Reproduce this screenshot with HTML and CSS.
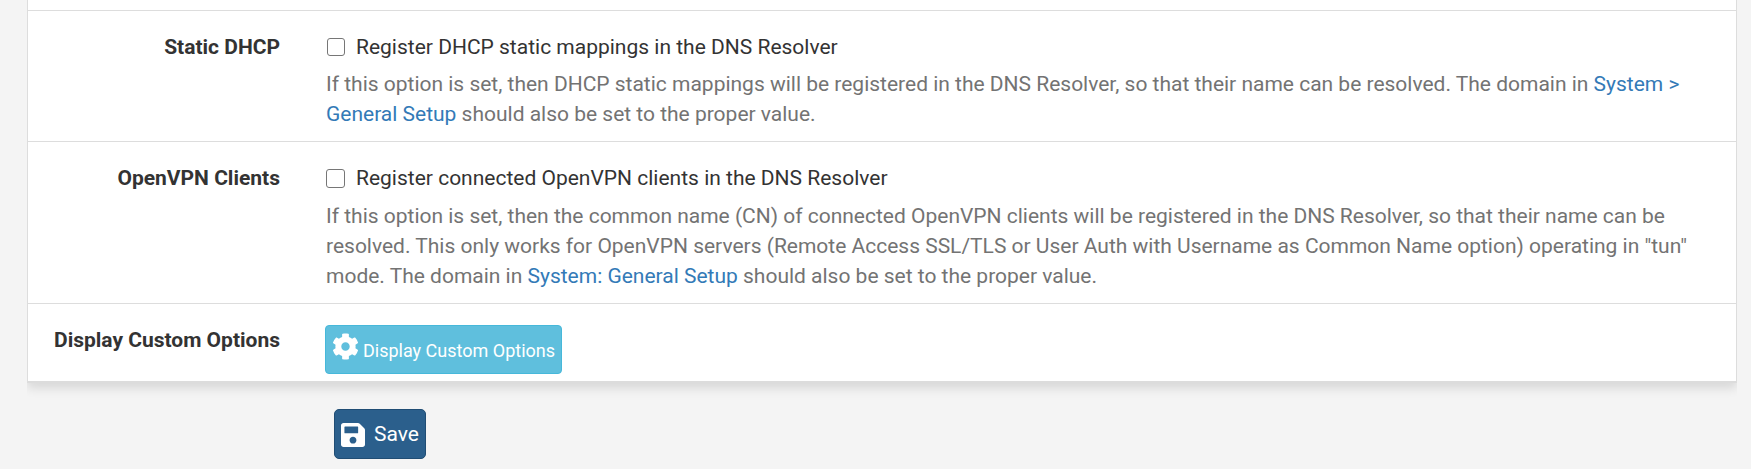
FILE: index.html
```
<!DOCTYPE html>
<html lang="en">
<head>
<meta charset="utf-8">
<title>DNS Resolver</title>
<link rel="stylesheet" href="styles.css">
</head>
<body>
<form class="page">
  <section class="panel">
    <div class="row row-static">
      <div class="label">Static DHCP</div>
      <div class="field">
        <label class="check"><input class="box" type="checkbox"><span class="check-text">Register DHCP static mappings in the DNS Resolver</span></label>
        <p class="help"><span class="line">If this option is set, then DHCP static mappings will be registered in the DNS Resolver, so that their name can be resolved. The domain in <a class="link">System &gt;</a></span> <span class="line"><a class="link">General Setup</a> should also be set to the proper value.</span></p>
      </div>
    </div>
    <div class="row row-vpn">
      <div class="label">OpenVPN Clients</div>
      <div class="field">
        <label class="check"><input class="box box-large" type="checkbox"><span class="check-text">Register connected OpenVPN clients in the DNS Resolver</span></label>
        <p class="help help-long"><span class="line">If this option is set, then the common name (CN) of connected OpenVPN clients will be registered in the DNS Resolver, so that their name can be</span> <span class="line">resolved. This only works for OpenVPN servers (Remote Access SSL/TLS or User Auth with Username as Common Name option) operating in "tun"</span> <span class="line">mode. The domain in <a class="link">System: General Setup</a> should also be set to the proper value.</span></p>
      </div>
    </div>
    <div class="row row-custom">
      <div class="label">Display Custom Options</div>
      <div class="field">
        <button class="btn btn-info" type="button">
          <svg class="gear" viewBox="0 0 512 512"><path fill="#fff" d="M487.4 315.7l-42.6-24.6c4.3-23.2 4.3-47 0-70.2l42.6-24.6c4.9-2.8 7.1-8.6 5.5-14-11.1-35.6-30-67.8-54.7-94.6-3.8-4.1-10-5.1-14.8-2.3L380.8 110c-17.9-15.4-38.5-27.3-60.8-35.1V25.800c0-5.600-3.900-10.500-9.400-11.700-36.700-8.200-74.300-7.800-109.200 0-5.500 1.200-9.400 6.100-9.400 11.700V75c-22.200 7.900-42.800 19.800-60.800 35.100L88.700 85.500c-4.900-2.800-11-1.900-14.800 2.300-24.700 26.700-43.600 58.900-54.700 94.600-1.700 5.400.6 11.200 5.500 14L67.300 221c-4.300 23.200-4.300 47 0 70.200l-42.600 24.600c-4.900 2.800-7.100 8.600-5.500 14 11.100 35.600 30 67.800 54.700 94.600 3.800 4.100 10 5.100 14.800 2.300l42.600-24.600c17.900 15.400 38.500 27.300 60.800 35.100v49.200c0 5.600 3.900 10.500 9.400 11.700 36.700 8.200 74.300 7.800 109.200 0 5.500-1.200 9.400-6.100 9.400-11.700v-49.200c22.200-7.900 42.800-19.800 60.800-35.100l42.600 24.600c4.900 2.800 11 1.900 14.800-2.300 24.700-26.700 43.600-58.900 54.700-94.600 1.500-5.500-.7-11.300-5.600-14.100zM256 336c-44.100 0-80-35.900-80-80s35.900-80 80-80 80 35.900 80 80-35.900 80-80 80z"/></svg>
          <span>Display Custom Options</span>
        </button>
      </div>
    </div>
  </section>
  <button class="btn btn-save" type="button">
    <svg class="disk" viewBox="0 0 448 448"><path fill="#fff" fill-rule="evenodd" d="M433.900 97.900l-83.900-83.900A48 48 0 0 0 316.100 0H48C21.500 0 0 21.500 0 48v352c0 26.500 21.500 48 48 48h352c26.500 0 48-21.500 48-48V131.900c0-12.700-5.100-25-14.100-34zM224 384c-35.300 0-64-28.700-64-64s28.700-64 64-64 64 28.700 64 64-28.700 64-64 64zm96-305.500V180c0 6.600-5.400 12-12 12H76c-6.600 0-12-5.400-12-12V76c0-6.600 5.400-12 12-12h228.500c3.200 0 6.200 1.300 8.500 3.500l3.500 3.500a12 12 0 0 1 3.500 7.500z"/></svg>
    <span>Save</span>
  </button>
</form>
</body>
</html>
```
FILE: styles.css
```
* { box-sizing: border-box; }
body {
  margin: 0;
  height: 469px;
  overflow: hidden;
  background: #f4f4f4;
  color: #333;
  font: 21px/30px Roboto, "Liberation Sans", sans-serif;
}
.page { margin: 0; }
.panel {
  margin: 0 14px 0 27px;
  padding-top: 10px;
  height: 383px;
  background: #fff;
  border: 1px solid #ddd;
  border-top: 0;
  border-bottom: 2px solid #dcdcdc;
  box-shadow: 0 5px 10px rgba(0, 0, 0, .12);
  clip-path: inset(0 0 -20px 0);
}
.row {
  display: flex;
  border-top: 1px solid #ddd;
  padding-top: 21px;
}
.row-static { height: 131px; }
.row-vpn { height: 162px; }
.label {
  width: 252px;
  flex: none;
  text-align: right;
  font-weight: 700;
}
.field { margin-left: 46px; flex: 1; }
.check { display: flex; align-items: center; height: 30px; }
.box {
  appearance: none;
  flex: none;
  width: 18px;
  height: 18px;
  margin: 0 11px 0 1px;
  border: 1px solid #767676;
  border-radius: 3px;
  background: #fff;
}
.box-large { width: 19px; height: 19px; margin: 0 11px 0 0; }
.help { margin: 7px 0 0; color: #737373; letter-spacing: -.006px; }
.help-long { margin-top: 8px; }
.line { display: block; white-space: nowrap; }
.link { color: #337ab7; }
.btn {
  display: flex;
  align-items: center;
  color: #fff;
  font-family: inherit;
  white-space: nowrap;
  border: 1px solid;
  border-radius: 4px;
}
.btn-info {
  width: 237px;
  height: 49px;
  margin-left: -1px;
  padding: 0 0 0 6px;
  gap: 4px;
  font-size: 18px;
  background: #5fbfdd;
  border-color: #46b8da;
}
.btn-info span { padding-top: 2px; }
.gear { width: 27px; height: 27px; margin-bottom: 6px; flex: none; }
.btn-save {
  width: 92px;
  height: 50px;
  margin: 26px 0 0 334px;
  padding: 0 0 0 6px;
  gap: 9px;
  font-size: 21px;
  border-radius: 5px;
  background: #2b5f8c;
  border-color: #204d74;
}
.disk { width: 24px; height: 24px; flex: none; margin-top: 2px; }
```
